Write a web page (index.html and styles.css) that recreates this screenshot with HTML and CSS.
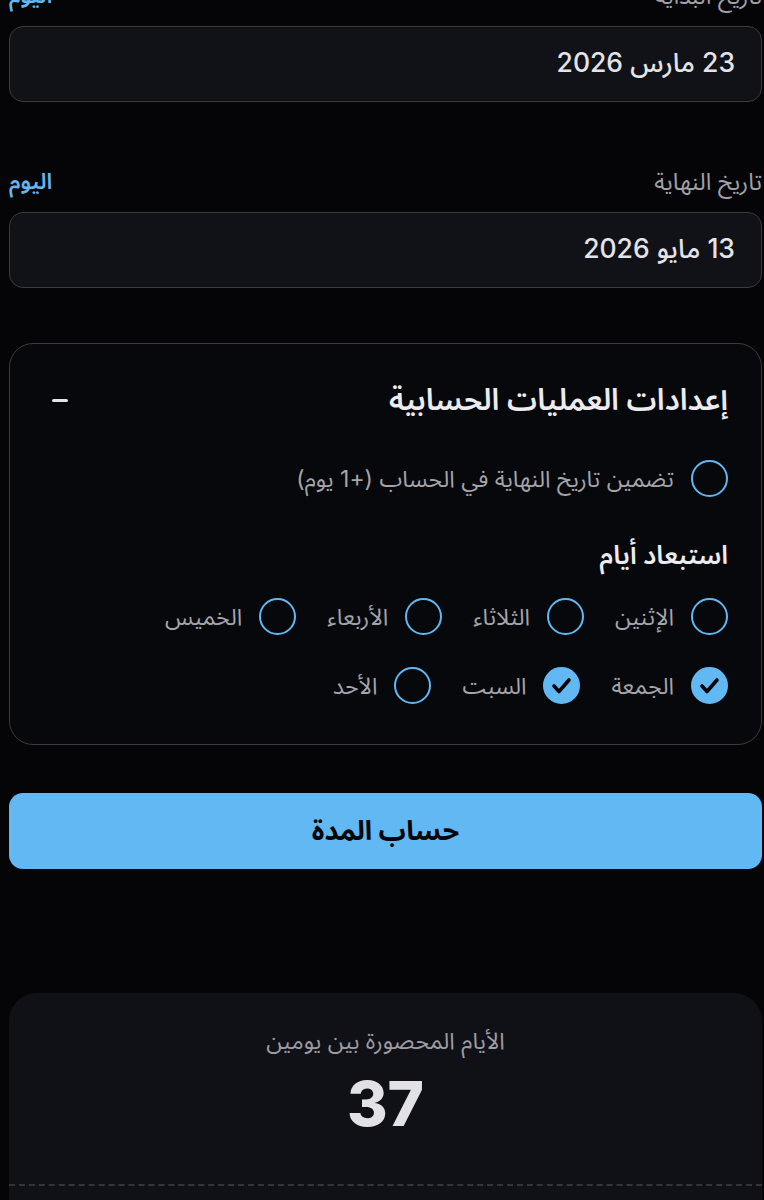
FILE: index.html
```html
<!DOCTYPE html>
<html lang="ar" dir="rtl">
<head>
<meta charset="utf-8">
<title>حساب المدة</title>
<link rel="stylesheet" href="styles.css">
</head>
<body>
<main class="page">
  <section class="field">
    <div class="field-head">
      <span class="field-label">تاريخ البداية</span>
      <span class="today">اليوم</span>
    </div>
    <div class="date-input">23 مارس 2026</div>
  </section>

  <section class="field field-end">
    <div class="field-head">
      <span class="field-label">تاريخ النهاية</span>
      <span class="today">اليوم</span>
    </div>
    <div class="date-input">13 مايو 2026</div>
  </section>

  <section class="settings">
    <div class="settings-head">
      <h2 class="settings-title">إعدادات العمليات الحسابية</h2>
      <span class="collapse"><span class="collapse-bar"></span></span>
    </div>

    <label class="check-row include-row">
      <span class="circle"></span>
      <span class="check-text">تضمين تاريخ النهاية في الحساب (+1 يوم)</span>
    </label>

    <h3 class="sub-title">استبعاد أيام</h3>

    <div class="days">
      <label class="check-row day"><span class="circle"></span><span class="check-text">الإثنين</span></label>
      <label class="check-row day"><span class="circle"></span><span class="check-text">الثلاثاء</span></label>
      <label class="check-row day"><span class="circle"></span><span class="check-text">الأربعاء</span></label>
      <label class="check-row day"><span class="circle"></span><span class="check-text">الخميس</span></label>
      <label class="check-row day"><span class="circle checked"><svg viewBox="0 0 37 37" width="37" height="37"><polyline points="11,19 16,24.5 26,13" fill="none" stroke="#050508" stroke-width="3.6" stroke-linecap="round" stroke-linejoin="round"/></svg></span><span class="check-text">الجمعة</span></label>
      <label class="check-row day"><span class="circle checked"><svg viewBox="0 0 37 37" width="37" height="37"><polyline points="11,19 16,24.5 26,13" fill="none" stroke="#050508" stroke-width="3.6" stroke-linecap="round" stroke-linejoin="round"/></svg></span><span class="check-text">السبت</span></label>
      <label class="check-row day"><span class="circle"></span><span class="check-text">الأحد</span></label>
    </div>
  </section>

  <button class="calc-btn" type="button">حساب المدة</button>

  <section class="result">
    <div class="result-main">
      <div class="result-label">الأيام المحصورة بين يومين</div>
      <div class="result-value">37</div>
    </div>
    <div class="result-rest"></div>
  </section>
</main>
</body>
</html>
```

FILE: styles.css
```css
html, body {
  margin: 0;
  padding: 0;
  background: #050508;
}

body {
  font-family: Inter, "Noto Sans Arabic", "DejaVu Sans", sans-serif;
  color: #e2e2e6;
  overflow: hidden;
}

.page {
  margin-top: -18px;
  padding: 0 2px 0 9px;
  display: flex;
  flex-direction: column;
}

.field-head {
  display: flex;
  justify-content: space-between;
  align-items: center;
  height: 28px;
  margin-bottom: 16px;
}

.field-label {
  font-size: 23.5px;
  color: #a0a0a6;
}

.today {
  font-size: 22px;
  font-weight: 600;
  color: #62b6f2;
}

.date-input {
  box-sizing: border-box;
  height: 76px;
  border: 1.5px solid #3a3b40;
  border-radius: 14px;
  background: #111218;
  display: flex;
  align-items: center;
  padding: 0 26px;
  font-size: 26.5px;
  font-weight: 500;
  color: #e4e4e8;
}

.field-end {
  margin-top: 66px;
}

.settings {
  margin-top: 55px;
  box-sizing: border-box;
  border: 1.5px solid #3a3b40;
  border-radius: 24px;
  background: #07080c;
  padding: 36px 33px 40px 33px;
}

.settings-head {
  display: flex;
  justify-content: space-between;
  align-items: center;
  height: 40px;
}

.settings-title {
  margin: 0;
  font-size: 30px;
  font-weight: 600;
  color: #ececf0;
}

.collapse {
  width: 34px;
  height: 34px;
  display: flex;
  align-items: center;
  justify-content: center;
}

.collapse-bar {
  width: 16px;
  height: 3px;
  border-radius: 2px;
  background: #e4e4e8;
}

.check-row {
  display: flex;
  align-items: center;
  gap: 17px;
}

.include-row {
  margin-top: 40px;
}

.circle {
  box-sizing: border-box;
  width: 37px;
  height: 37px;
  flex: none;
  border-radius: 50%;
  border: 2px solid #62b6f2;
  display: flex;
  align-items: center;
  justify-content: center;
}

.circle.checked {
  background: #62b8f3;
  border-color: #62b8f3;
}

.circle svg {
  display: block;
  flex: none;
}

.check-text {
  font-size: 23px;
  color: #a4a4aa;
  line-height: 28px;
}

.sub-title {
  margin: 41px 0 0;
  font-size: 26px;
  font-weight: 600;
  line-height: 34px;
  color: #ececf0;
}

.days {
  margin-top: 26px;
  display: flex;
  flex-wrap: wrap;
  column-gap: 31px;
  row-gap: 32px;
  max-width: 630px;
}

.calc-btn {
  margin-top: 48px;
  height: 76px;
  border: none;
  border-radius: 14px;
  background: #62b8f3;
  color: #050508;
  font-family: inherit;
  font-size: 27px;
  font-weight: 700;
  cursor: pointer;
}

.result {
  margin-top: 124px;
  border-radius: 28px;
  background: #101117;
  overflow: hidden;
}

.result-main {
  padding: 32px 0 44px;
  text-align: center;
  border-bottom: 2px dashed #34353b;
}

.result-label {
  font-size: 23px;
  line-height: 32px;
  color: #9c9ca2;
}

.result-value {
  margin-top: 11px;
  font-size: 62px;
  line-height: 72px;
  font-weight: 800;
  color: #e2e2e6;
}

.result-rest {
  height: 120px;
}
```
